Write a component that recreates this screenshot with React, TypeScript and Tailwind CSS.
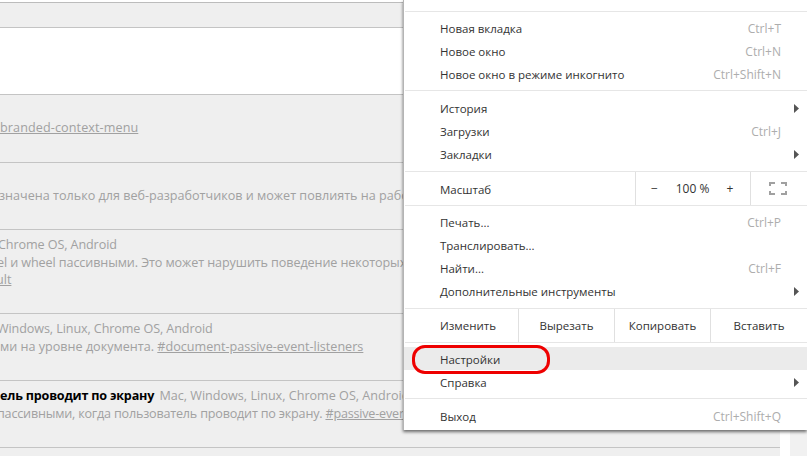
const font = "font-['Open_Sans',sans-serif]";

function Row({ lines, bg = "bg-[#efefef]", h }: { lines: React.ReactNode[]; bg?: string; h: string }) {
  return (
    <div className={`${h} ${bg} border-b border-[#c4c4c4] pt-[6px] overflow-hidden`}>
      {lines.map((line, i) => (
        <div key={i} className="h-[17.5px] leading-[17.5px] whitespace-nowrap text-[#a1a1a1]">
          {line}
        </div>
      ))}
    </div>
  );
}

function Item({ label, shortcut, arrow, active, low }: { label: string; shortcut?: string; arrow?: boolean; active?: boolean; low?: boolean }) {
  return (
    <div className={`h-[23px] flex items-center justify-between pl-[36px] ${low ? "pt-[2px]" : "pb-[2px]"} ${arrow ? "pr-[8px]" : "pr-[26px]"} ${active ? "bg-[#ebebeb]" : ""}`}>
      <span>{label}</span>
      {shortcut && <span className="text-[12px] text-[#adadad]">{shortcut}</span>}
      {arrow && (
        <svg width="5" height="9" viewBox="0 0 5 9" className="text-[#555]">
          <path d="M0 0 L5 4.5 L0 9 Z" fill="currentColor" />
        </svg>
      )}
    </div>
  );
}

function Sep() {
  return <div className="h-px bg-[#e6e6e6] ml-px" />;
}

function Menu() {
  return (
    <div className="absolute left-[403px] top-0 right-0 h-[430px] bg-white border-l border-[#b4b4b4] shadow-[0_2px_3px_rgba(0,0,0,0.55)] text-[11.5px] text-[#333]">
      <div className="h-[11px]" />
      <Sep />
      <div className="pt-[6px] pb-[3px]">
        <Item label="Новая вкладка" shortcut="Ctrl+T" />
        <Item label="Новое окно" shortcut="Ctrl+N" />
        <Item label="Новое окно в режиме инкогнито" shortcut="Ctrl+Shift+N" />
      </div>
      <Sep />
      <div className="pt-[7px] pb-[4px]">
        <Item label="История" arrow />
        <Item label="Загрузки" shortcut="Ctrl+J" />
        <Item label="Закладки" arrow />
      </div>
      <Sep />
      <div className="h-[33px] flex items-center">
        <span className="pl-[36px] w-[231px] pt-[2px]">Масштаб</span>
        <div className="h-full w-[115px] flex items-center border-l border-[#e0e0e0] text-[12px]">
          <span className="w-[37px] text-center">−</span>
          <span className="flex-1 text-center">100 %</span>
          <span className="w-[38px] text-center pr-[2px]">+</span>
        </div>
        <div className="h-full flex-1 flex items-center justify-center border-l border-[#e0e0e0] pr-[2px]">
          <svg width="18" height="13" viewBox="0 0 18 13" fill="none" stroke="#a0a0a0" strokeWidth="2">
            <path d="M1 4 V1 H6 M12 1 H17 V4 M17 9 V12 H12 M6 12 H1 V9" />
          </svg>
        </div>
      </div>
      <Sep />
      <div className="pt-[6px] pb-[4px]">
        <Item label="Печать..." shortcut="Ctrl+P" />
        <Item label="Транслировать..." />
        <Item label="Найти..." shortcut="Ctrl+F" />
        <Item label="Дополнительные инструменты" arrow />
      </div>
      <Sep />
      <div className="h-[33px] flex items-center">
        <span className="pl-[36px] w-[114px]">Изменить</span>
        <span className="h-full w-[96px] flex items-center justify-center border-l border-[#e0e0e0]">Вырезать</span>
        <span className="h-full w-[96px] flex items-center justify-center border-l border-[#e0e0e0]">Копировать</span>
        <span className="h-full flex-1 flex items-center justify-center border-l border-[#e0e0e0]">Вставить</span>
      </div>
      <Sep />
      <div className="relative pt-[4px] pb-[5px]">
        <Item label="Настройки" active low />
        <Item label="Справка" arrow low />
        <div className="absolute left-[8px] top-[2px] w-[138px] h-[29px] rounded-[13px] border-[3px] border-[#ee0000]" />
      </div>
      <Sep />
      <div className="pt-[7px]">
        <Item label="Выход" shortcut="Ctrl+Shift+Q" />
      </div>
    </div>
  );
}

export default function App() {
  return (
    <div className={`relative h-[456px] w-[807px] overflow-hidden flex bg-white text-[12.6px] ${font}`}>
      <div className="w-[780px] shrink-0">
        <div className="h-[3px] bg-white border-b border-[#bcbcbc]" />
        <div className="h-[25px] bg-[#efefef] border-b border-[#c4c4c4]" />
        <div className="h-[67px] bg-white border-b border-[#c4c4c4]" />
        <Row h="h-[68px]" lines={["", <span className="underline tracking-[0.1px]">branded-context-menu</span>]} />
        <Row h="h-[67px]" lines={["", <span className="block -ml-px">значена только для веб-разработчиков и может повлиять на работу браузера</span>]} />
        <Row
          h="h-[84px]"
          lines={[
            <span className="block -ml-[2px] tracking-[-0.1px]">Chrome OS, Android</span>,
            <span className="block -ml-[3px] tracking-[-0.1px]">el и wheel пассивными. Это может нарушить поведение некоторых сайтов</span>,
            <span className="block -ml-[4px] underline">ult</span>,
          ]}
        />
        <Row
          h="h-[67px]"
          lines={[
            <span className="block -ml-[3px] tracking-[-0.1px]">Windows, Linux, Chrome OS, Android</span>,
            <span>ми на уровне документа. <span className="underline">#document-passive-event-listeners</span></span>,
          ]}
        />
        <Row
          h="h-[67px]"
          lines={[
            <span><b className="text-black tracking-[-0.2px] mr-[2px]">ель проводит по экрану</b> Mac, Windows, Linux, Chrome OS, Android</span>,
            <span className="block -ml-[3px] tracking-[-0.2px]">пассивными, когда пользователь проводит по экрану. <span className="underline">#passive-event-listeners</span></span>,
          ]}
        />
        <div className="h-[9px] bg-[#efefef]" />
      </div>
      <div className="w-[10px] bg-white" />
      <div className="flex-1 bg-[#f1f1f1]" />
      <Menu />
    </div>
  );
}
